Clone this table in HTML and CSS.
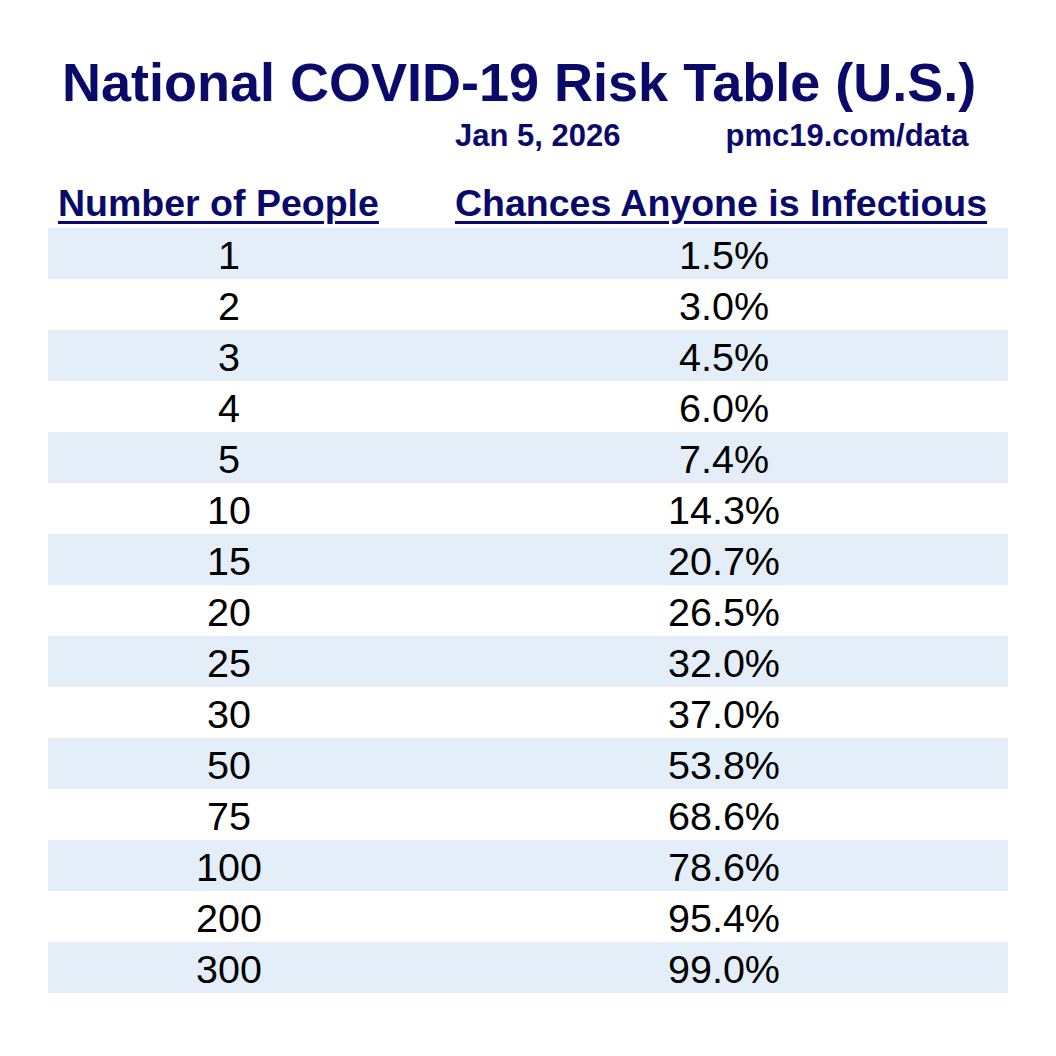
FILE: index.html
```html
<!DOCTYPE html>
<html lang="en">
<head>
<meta charset="utf-8">
<title>National COVID-19 Risk Table (U.S.)</title>
<link rel="stylesheet" href="styles.css">
</head>
<body>
<main class="page">
  <h1 class="title">National COVID-19 Risk Table (U.S.)</h1>
  <div class="meta">
    <span class="date">Jan 5, 2026</span>
    <span class="source">pmc19.com/data</span>
  </div>
  <div class="table">
    <div class="head">
      <span class="th th-people">Number of People</span>
      <span class="th th-chance">Chances Anyone is Infectious</span>
    </div>
    <div class="row"><span class="c1">1</span><span class="c2">1.5%</span></div>
    <div class="row"><span class="c1">2</span><span class="c2">3.0%</span></div>
    <div class="row"><span class="c1">3</span><span class="c2">4.5%</span></div>
    <div class="row"><span class="c1">4</span><span class="c2">6.0%</span></div>
    <div class="row"><span class="c1">5</span><span class="c2">7.4%</span></div>
    <div class="row"><span class="c1">10</span><span class="c2">14.3%</span></div>
    <div class="row"><span class="c1">15</span><span class="c2">20.7%</span></div>
    <div class="row"><span class="c1">20</span><span class="c2">26.5%</span></div>
    <div class="row"><span class="c1">25</span><span class="c2">32.0%</span></div>
    <div class="row"><span class="c1">30</span><span class="c2">37.0%</span></div>
    <div class="row"><span class="c1">50</span><span class="c2">53.8%</span></div>
    <div class="row"><span class="c1">75</span><span class="c2">68.6%</span></div>
    <div class="row"><span class="c1">100</span><span class="c2">78.6%</span></div>
    <div class="row"><span class="c1">200</span><span class="c2">95.4%</span></div>
    <div class="row"><span class="c1">300</span><span class="c2">99.0%</span></div>
  </div>
</main>
</body>
</html>
```
FILE: styles.css
```css
html, body {
  margin: 0;
  padding: 0;
  background: #ffffff;
}

body {
  font-family: "Liberation Sans", Arial, sans-serif;
  color: #000000;
}

.page {
  width: 1056px;
  height: 1056px;
  box-sizing: border-box;
  padding: 52px 48px 0 48px;
}

.title {
  margin: 0;
  padding-left: 14px;
  font-size: 54px;
  line-height: 60px;
  font-weight: 700;
  color: #0a0a6b;
  white-space: nowrap;
}

.meta {
  margin-top: 7px;
  display: flex;
  padding-left: 407px;
  gap: 105px;
  font-size: 31px;
  line-height: 34px;
  font-weight: 700;
  color: #0a0a6b;
}

.table {
  margin-top: 28px;
}

.head {
  display: grid;
  grid-template-columns: 362px 1fr;
  height: 44px;
  margin-bottom: 3px;
}

.th {
  font-size: 37.5px;
  font-weight: 700;
  color: #0a0a6b;
  line-height: 44px;
  text-decoration: underline;
  text-decoration-thickness: 3px;
  text-underline-offset: 5px;
  white-space: nowrap;
  justify-self: start;
}

.th-people {
  margin-left: 10px;
}

.th-chance {
  margin-left: 45px;
}

.row {
  display: grid;
  grid-template-columns: 362px 1fr;
  height: 51px;
  box-sizing: border-box;
  padding-top: 4px;
  font-size: 39.5px;
  line-height: 47px;
}

.row:nth-child(even) {
  background: #e3eef9;
}

.c1 {
  text-align: center;
}

.c2 {
  text-align: center;
  padding-left: 30px;
}
```
